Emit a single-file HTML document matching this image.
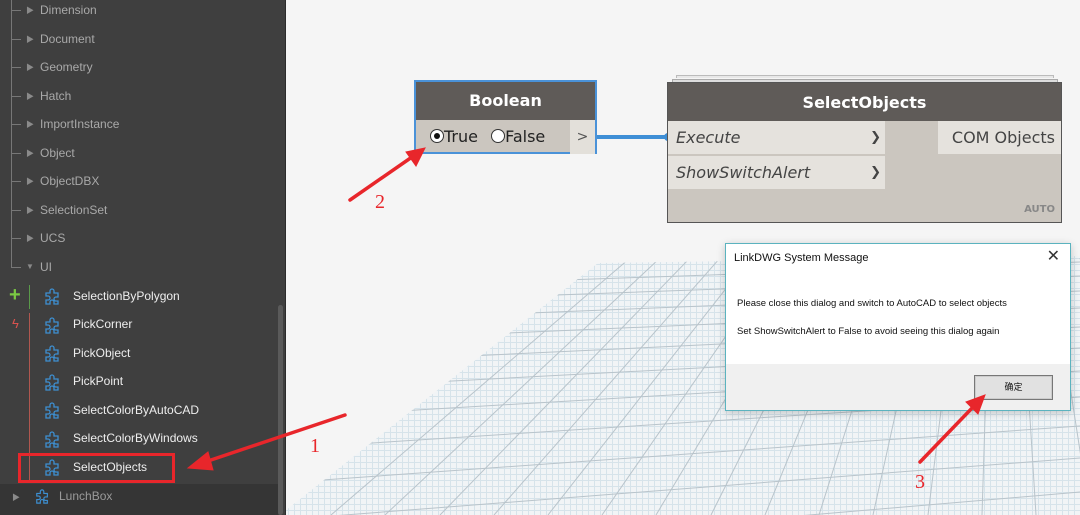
<!DOCTYPE html>
<html style="overflow:hidden;width:1080px;height:515px"><head><meta charset="utf-8"><style>
*{margin:0;padding:0;box-sizing:border-box}
body{width:1080px;height:515px;overflow:hidden;background:#f5f5f5;font-family:"Liberation Sans","Noto Sans CJK SC",sans-serif;position:relative}
.abs{position:absolute}
#side{left:0;top:0;width:286px;height:515px;background:#3f3f3f;border-right:1px solid #2c2c2c;overflow:hidden}
.cat{position:absolute;left:40px;font-size:12px;color:#a9a9a9}
.tri{position:absolute;left:26px;font-size:8px;color:#8a8a8a}
.dash{position:absolute;left:12px;width:9px;height:1px;background:#777}
.it{position:absolute;left:73px;font-size:12px;color:#eeeeee}
.pz{position:absolute;left:44px;width:17px;height:17px}
.node{position:absolute;font-family:"DejaVu Sans",sans-serif}
</style></head><body>
<svg class="abs" style="left:0;top:0;display:block" width="1080" height="515">
<defs>
<pattern id="g" width="6" height="6" patternUnits="userSpaceOnUse">
<rect width="6" height="6" fill="#f1f4f6"/>
<path d="M0 0.5H6M0.5 0V6" stroke="#d6e3ea" stroke-width="1"/>
</pattern>
<clipPath id="cp"><polygon points="598,263 1080,256 1080,515 285,515 285,511"/></clipPath>
</defs>
<polygon points="598,263 1080,256 1080,515 285,515 285,511" fill="url(#g)"/>
<g clip-path="url(#cp)" stroke="#b9c4cb" stroke-width="1">
<path d="M598 258L273 515M630 258L331 515M660 258L385 515M690 258L440 515M720 258L494 515M750 258L548 515M780 258L602 515M810 258L656 515M840 258L711 515M870 258L765 515M900 258L819 515M930 258L873 515M960 258L928 515M990 258L982 515M1020 258L1036 515M1050 258L1090 515M1080 258L1145 515"/>
<path d="M280 290L1080 262M280 305L1080 276M280 323L1080 291M280 343L1080 308M280 365L1080 327M280 390L1080 348M280 418L1080 371M280 449L1080 397M280 483L1080 426M280 520L1080 458M280 560L1080 492"/>
</g>
</svg>

<div id="side" class="abs">
<div class="abs" style="left:11px;top:0;width:1px;height:268px;background:#777"></div>
<div class="dash" style="top:10px"></div><div class="tri" style="top:5px">▶</div><div class="cat" style="top:3px">Dimension</div>
<div class="dash" style="top:39px"></div><div class="tri" style="top:34px">▶</div><div class="cat" style="top:32px">Document</div>
<div class="dash" style="top:67px"></div><div class="tri" style="top:62px">▶</div><div class="cat" style="top:60px">Geometry</div>
<div class="dash" style="top:96px"></div><div class="tri" style="top:91px">▶</div><div class="cat" style="top:89px">Hatch</div>
<div class="dash" style="top:124px"></div><div class="tri" style="top:119px">▶</div><div class="cat" style="top:117px">ImportInstance</div>
<div class="dash" style="top:153px"></div><div class="tri" style="top:148px">▶</div><div class="cat" style="top:146px">Object</div>
<div class="dash" style="top:181px"></div><div class="tri" style="top:176px">▶</div><div class="cat" style="top:174px">ObjectDBX</div>
<div class="dash" style="top:210px"></div><div class="tri" style="top:205px">▶</div><div class="cat" style="top:203px">SelectionSet</div>
<div class="dash" style="top:238px"></div><div class="tri" style="top:233px">▶</div><div class="cat" style="top:231px">UCS</div>
<div class="dash" style="top:267px"></div><div class="tri" style="top:262px">▼</div><div class="cat" style="top:260px">UI</div>
<div class="abs" style="left:9px;top:285px;color:#7ac943;font-size:20px;font-weight:bold;line-height:20px">+</div>
<div class="abs" style="left:29px;top:285px;width:1px;height:24px;background:#5a9a4a"></div>
<div class="abs" style="left:12px;top:316px;color:#d9534f;font-size:13px">ϟ</div>
<div class="abs" style="left:29px;top:313px;width:1px;height:168px;background:#b0574f"></div>
<svg width="0" height="0" style="position:absolute"><defs><symbol id="pz" viewBox="0 0 17 17"><path d="M2 5h4v-2a2 2 0 0 1 4 0v2h4v4h-2a2 2 0 0 0 0 4h2v3h-4v-2a2 2 0 0 0-4 0v2h-4v-4h2a2 2 0 0 0 0-4h-2z" fill="none" stroke="#3d8fd1" stroke-width="1.3"/></symbol></defs></svg>
<svg class="pz" style="top:288px"><use href="#pz"/></svg><div class="it" style="top:289px">SelectionByPolygon</div>
<svg class="pz" style="top:317px"><use href="#pz"/></svg><div class="it" style="top:317px">PickCorner</div>
<svg class="pz" style="top:345px"><use href="#pz"/></svg><div class="it" style="top:346px">PickObject</div>
<svg class="pz" style="top:374px"><use href="#pz"/></svg><div class="it" style="top:374px">PickPoint</div>
<svg class="pz" style="top:402px"><use href="#pz"/></svg><div class="it" style="top:403px">SelectColorByAutoCAD</div>
<svg class="pz" style="top:431px"><use href="#pz"/></svg><div class="it" style="top:431px">SelectColorByWindows</div>
<svg class="pz" style="top:459px"><use href="#pz"/></svg><div class="it" style="top:460px">SelectObjects</div>
<div class="abs" style="left:18px;top:453px;width:157px;height:30px;border:3px solid #e8262b"></div>
<div class="abs" style="left:0;top:484px;width:278px;height:31px;background:#353535"></div>
<div class="tri" style="left:12px;top:492px">▶</div>
<svg class="pz" style="left:35px;top:489px;width:15px;height:15px"><use href="#pz"/></svg>
<div class="cat" style="left:59px;top:489px;color:#9a9a9a">LunchBox</div>
<div class="abs" style="left:278px;top:305px;width:5px;height:210px;background:#5a5a5a;border-radius:3px"></div>
</div>

<div class="abs" style="left:596px;top:135px;width:72px;height:4px;background:#3f8fd6"></div>
<div class="abs" style="left:664px;top:133px;width:8px;height:8px;border-radius:50%;background:#3f8fd6"></div>

<div class="node" style="left:414px;top:80px;width:183px;height:74px;border:2px solid #4a92d8;background:#cbc6bf">
<div style="height:38px;background:#5f5b58;color:#fff;font-weight:bold;font-size:16px;text-align:center;line-height:38px">Boolean</div>
<div style="position:absolute;left:14px;top:45px;font-size:16px;color:#222">
<span style="display:inline-block;width:14px;height:14px;border:1px solid #333;border-radius:50%;background:#fff;vertical-align:-1px;position:relative"><span style="position:absolute;left:3px;top:3px;width:6px;height:6px;border-radius:50%;background:#111"></span></span>True
<span style="display:inline-block;width:14px;height:14px;border:1px solid #333;border-radius:50%;background:#fff;vertical-align:-1px;margin-left:8px"></span>False</div>
<div style="position:absolute;right:0;top:38px;width:25px;height:34px;background:#e3e0da;color:#555;text-align:center;line-height:34px;font-size:14px">&gt;</div>
</div>

<div class="abs" style="left:676px;top:75px;width:378px;height:3px;border:1px solid #bbb;border-bottom:none;background:#e8e8e8"></div>
<div class="abs" style="left:672px;top:79px;width:386px;height:4px;border:1px solid #aaa;border-bottom:none;background:#ddd"></div>
<div class="node" style="left:667px;top:82px;width:395px;height:141px;border:1px solid #555;background:#cbc6bf">
<div style="height:38px;background:#5f5b58;color:#fff;font-weight:bold;font-size:16px;text-align:center;line-height:40px">SelectObjects</div>
<div style="position:absolute;left:0;top:38px;width:217px;height:33px;background:#e5e2dd;font-style:italic;font-size:16px;color:#444;line-height:33px;padding-left:8px">Execute<span style="position:absolute;right:4px;font-weight:bold;font-style:normal;font-size:13px">❯</span></div>
<div style="position:absolute;left:0;top:73px;width:217px;height:33px;background:#e5e2dd;font-style:italic;font-size:16px;color:#444;line-height:33px;padding-left:8px">ShowSwitchAlert<span style="position:absolute;right:4px;font-weight:bold;font-style:normal;font-size:13px">❯</span></div>
<div style="position:absolute;right:0;top:38px;width:123px;height:33px;background:#e5e2dd;font-size:16px;color:#444;line-height:33px;text-align:right;padding-right:6px">COM Objects</div>
<div style="position:absolute;right:6px;bottom:7px;font-size:10px;font-weight:bold;color:#888">AUTO</div>
</div>

<div class="abs" style="left:725px;top:243px;width:346px;height:168px;border:1px solid #5bb3bf;background:#fff;box-shadow:0 2px 8px rgba(0,0,0,.2)">
<div class="abs" style="left:8px;top:8px;font-size:11px;color:#111">LinkDWG System Message</div>
<div class="abs" style="right:10px;top:4px;font-size:16px;line-height:18px;color:#333">✕</div>
<div class="abs" style="left:11px;top:54px;font-size:9.5px;color:#111">Please close this dialog and switch to AutoCAD to select objects</div>
<div class="abs" style="left:11px;top:82px;font-size:9.5px;color:#111">Set ShowSwitchAlert to False to avoid seeing this dialog again</div>
<div class="abs" style="left:0;top:120px;width:344px;height:46px;background:#f0f0f0">
<div class="abs" style="left:248px;top:11px;width:79px;height:25px;border:1px solid #777;box-shadow:inset 0 0 0 1px #ccc;background:#e1e1e1;font-size:9px;text-align:center;line-height:23px;color:#111">确定</div>
</div></div>

<svg class="abs" style="left:0;top:0;display:block" width="1080" height="515">
<g stroke="#e8262b" stroke-width="3.5" fill="#e8262b" stroke-linecap="round">
<line x1="345" y1="415" x2="205" y2="462"/><polygon points="188,468 208,452 213,470" stroke-width="1"/>
<line x1="350" y1="200" x2="412" y2="157"/><polygon points="425,148 406,152 416,166" stroke-width="1"/>
<line x1="920" y1="462" x2="975" y2="405"/><polygon points="985,395 966,402 978,414" stroke-width="1"/>
</g>
<g fill="#e8262b" font-family="Liberation Serif,serif" font-size="20">
<text x="310" y="452">1</text><text x="375" y="208">2</text><text x="915" y="488">3</text>
</g>
</svg>
</body></html>
